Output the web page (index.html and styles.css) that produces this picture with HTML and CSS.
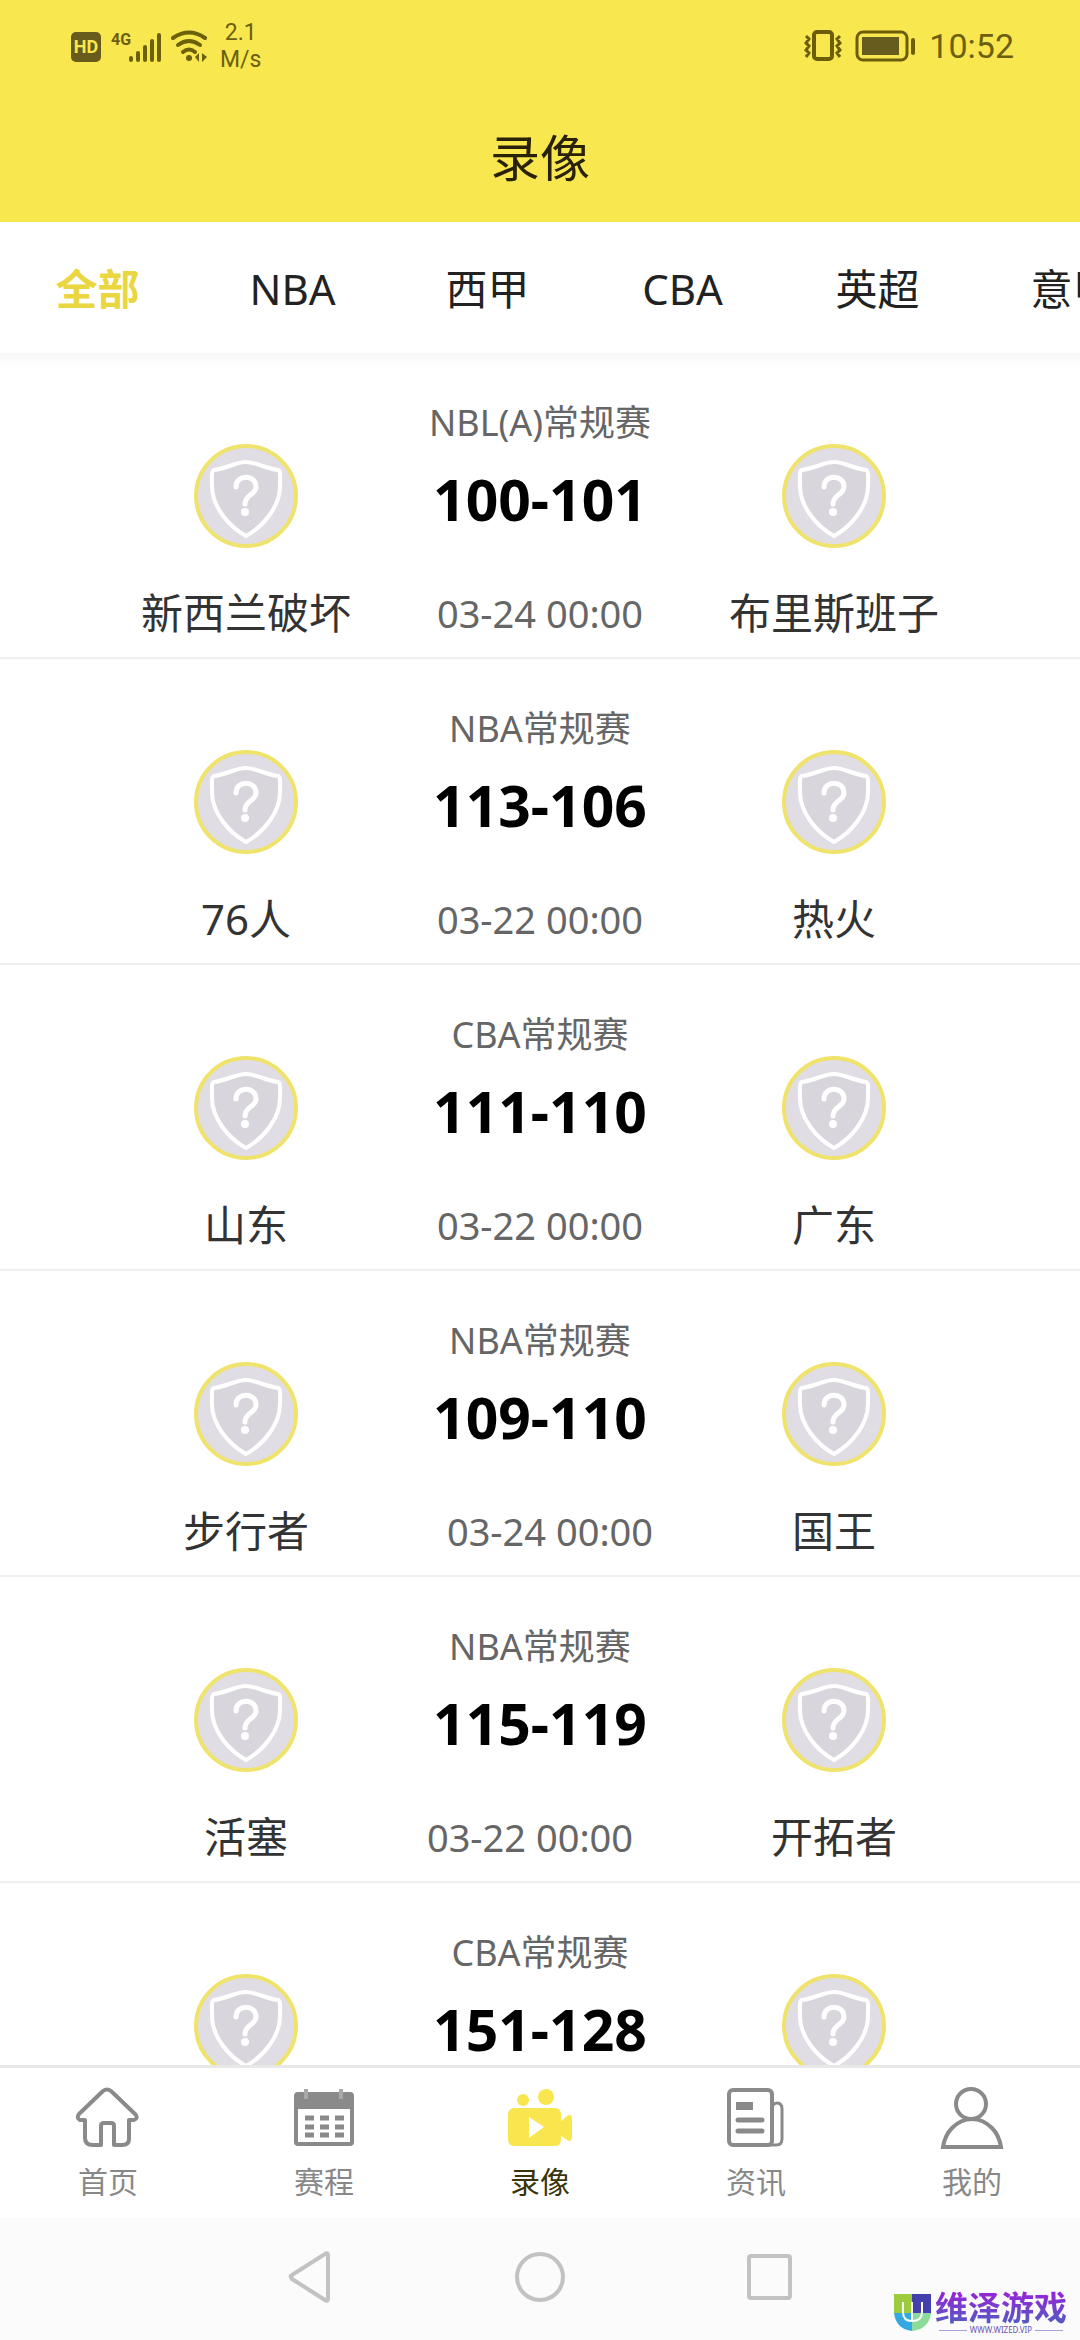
FILE: index.html
```html
<!DOCTYPE html>
<html lang="zh-CN">
<head>
    <meta charset="UTF-8">
    <meta name="viewport" content="width=device-width, initial-scale=1.0">
    <title>录像</title>
    <link rel="stylesheet" href="styles.css">
</head>
<body>
    <!-- 球队默认图标 -->
    <svg width="0" height="0" class="defs">
        <symbol id="shield" viewBox="0 0 104 104">
            <circle cx="52" cy="52" r="50" fill="#e0dde5" stroke="#f0e36c" stroke-width="4"/>
            <path d="M52 18C62 18 70 24 84 26C87 27 86 34 86 42C86 62 70 82 52 92C34 82 18 62 18 42C18 34 17 27 20 26C34 24 42 18 52 18Z" fill="#d8d6dc" stroke="#fff" stroke-width="4" stroke-linejoin="round"/>
            <path d="M42 43C42 30 62 30 62 43C62 51 51 50 51 60" fill="none" stroke="#fff" stroke-width="5" stroke-linecap="round"/>
            <circle cx="51" cy="68" r="4" fill="#fff"/>
        </symbol>
    </svg>

    <header class="header">
        <div class="status">
            <svg class="status-left" width="140" height="36" viewBox="0 0 140 36">
                <rect x="1" y="4" width="30" height="30" rx="5" fill="#675c1c"/>
                <text x="16" y="25" text-anchor="middle" class="hd">HD</text>
                <text x="41" y="17" class="g4">4G</text>
                <g stroke="#6c600c" stroke-width="4" stroke-linecap="round">
                    <path d="M61 30V32M68 25V32M75 19V32M82 13V32M89 7V32"/>
                </g>
                <g fill="none" stroke="#6c600c" stroke-width="4" stroke-linecap="round">
                    <path d="M103 10Q119 -1 135 10"/>
                    <path d="M108 17Q119 9 130 17"/>
                    <path d="M113 24Q119 19 125 24"/>
                </g>
                <circle cx="119" cy="30" r="3" fill="#6c600c"/>
                <path d="M129 25V34L125 29ZM132 25V34L137 29Z" fill="#6c600c"/>
            </svg>
            <div class="speed">2.1<br>M/s</div>
            <div class="status-right">
                <svg width="112" height="34" viewBox="0 0 112 34" fill="none" stroke="#6c5d08">
                    <rect x="11" y="3" width="18" height="27" rx="3" stroke-width="4"/>
                    <path d="M3 7L6 10L3 14L6 17L3 21L6 24L3 28M37 7L34 10L37 14L34 17L37 21L34 24L37 28" stroke-width="3"/>
                    <rect x="54" y="3" width="50" height="28" rx="6" stroke-width="3"/>
                    <rect x="59" y="8" width="37" height="18" fill="#665c1e" stroke="none"/>
                    <path d="M110 11V24" stroke-width="4" stroke-linecap="round"/>
                </svg>
                <span class="clock">10:52</span>
            </div>
        </div>
        <h1>录像</h1>
    </header>

    <nav class="tabs">
        <button class="active">全部</button>
        <button>NBA</button>
        <button>西甲</button>
        <button>CBA</button>
        <button>英超</button>
        <button>意甲</button>
    </nav>

    <main class="list">
        <div class="match">
            <div class="team"><svg class="logo"><use href="#shield"/></svg><p>新西兰破坏</p></div>
            <div class="info">
                <p class="league">NBL(A)常规赛</p>
                <p class="score">100-101</p>
                <p class="time">03-24 00:00</p>
            </div>
            <div class="team"><svg class="logo"><use href="#shield"/></svg><p>布里斯班子</p></div>
        </div>
        <div class="match">
            <div class="team"><svg class="logo"><use href="#shield"/></svg><p>76人</p></div>
            <div class="info">
                <p class="league">NBA常规赛</p>
                <p class="score">113-106</p>
                <p class="time">03-22 00:00</p>
            </div>
            <div class="team"><svg class="logo"><use href="#shield"/></svg><p>热火</p></div>
        </div>
        <div class="match">
            <div class="team"><svg class="logo"><use href="#shield"/></svg><p>山东</p></div>
            <div class="info">
                <p class="league">CBA常规赛</p>
                <p class="score">111-110</p>
                <p class="time">03-22 00:00</p>
            </div>
            <div class="team"><svg class="logo"><use href="#shield"/></svg><p>广东</p></div>
        </div>
        <div class="match long-home">
            <div class="team"><svg class="logo"><use href="#shield"/></svg><p>步行者</p></div>
            <div class="info">
                <p class="league">NBA常规赛</p>
                <p class="score">109-110</p>
                <p class="time">03-24 00:00</p>
            </div>
            <div class="team"><svg class="logo"><use href="#shield"/></svg><p>国王</p></div>
        </div>
        <div class="match long-away">
            <div class="team"><svg class="logo"><use href="#shield"/></svg><p>活塞</p></div>
            <div class="info">
                <p class="league">NBA常规赛</p>
                <p class="score">115-119</p>
                <p class="time">03-22 00:00</p>
            </div>
            <div class="team"><svg class="logo"><use href="#shield"/></svg><p>开拓者</p></div>
        </div>
        <div class="match">
            <div class="team"><svg class="logo"><use href="#shield"/></svg></div>
            <div class="info">
                <p class="league">CBA常规赛</p>
                <p class="score">151-128</p>
            </div>
            <div class="team"><svg class="logo"><use href="#shield"/></svg></div>
        </div>
    </main>

    <nav class="tabbar">
        <a href="#">
            <svg viewBox="0 0 66 66" fill="none" stroke="#8a8a8a" stroke-width="4" stroke-linejoin="round">
                <path d="M28 6Q32 3 36 6L60 29Q64 33 59 35H54V54Q54 60 47 60H39V41Q39 38 36 38H29Q26 38 26 41V60H18Q10 60 10 53V35H5Q1 33 4 29Z"/>
            </svg>
            <span>首页</span>
        </a>
        <a href="#">
            <svg viewBox="0 0 66 66">
                <rect x="5" y="9" width="56" height="50" rx="2" fill="none" stroke="#8a8a8a" stroke-width="4"/>
                <path d="M4 8H62V24H4Z" fill="#8a8a8a"/>
                <path d="M15 4V14M50 4V14" stroke="#a8a8a8" stroke-width="4"/>
                <path d="M14 33H23M29 33H38M44 33H53M14 42H23M29 42H38M44 42H53M14 50H23M29 50H38M44 50H53" stroke="#8a8a8a" stroke-width="5"/>
            </svg>
            <span>赛程</span>
        </a>
        <a href="#" class="active">
            <svg viewBox="0 0 66 66" fill="#f9e64f">
                <circle cx="16" cy="15" r="6"/>
                <circle cx="39" cy="12" r="8"/>
                <rect x="1" y="23" width="53" height="38" rx="6"/>
                <path d="M53 37L60 31Q65 28 65 34V51Q65 58 60 55L53 50Z"/>
                <path d="M22 32L37 42L22 53Z" fill="#fff"/>
            </svg>
            <span>录像</span>
        </a>
        <a href="#">
            <svg viewBox="0 0 66 66" fill="none" stroke="#8a8a8a" stroke-width="4">
                <rect x="6" y="5" width="43" height="55" rx="4"/>
                <path d="M49 23Q50 18 54 18Q59 18 59 24V54Q59 60 53 60H45" stroke-width="3"/>
                <path d="M13 21H30" stroke-width="8"/>
                <path d="M15 35H39M15 46H39" stroke-width="5" stroke-linecap="round"/>
            </svg>
            <span>资讯</span>
        </a>
        <a href="#">
            <svg viewBox="0 0 66 66" fill="none" stroke="#8a8a8a" stroke-width="4">
                <circle cx="32" cy="19" r="15"/>
                <path d="M4 62Q6 50 13 43Q22 34 33 34Q44 34 53 43Q60 50 62 62Z"/>
            </svg>
            <span>我的</span>
        </a>
    </nav>

    <footer class="sysbar">
        <button aria-label="返回"><svg viewBox="0 0 50 54"><path d="M6 27Q5 26 7 25L40 4Q43 2 43 5V49Q43 52 40 50L7 29Z"/></svg></button>
        <button aria-label="主屏幕"><svg viewBox="0 0 50 54"><circle cx="25" cy="27" r="23"/></svg></button>
        <button aria-label="最近任务"><svg viewBox="0 0 50 54"><rect x="4" y="6" width="41" height="42" rx="2"/></svg></button>
        <div class="brand">
            <svg width="37" height="37" viewBox="0 0 37 37">
                <path d="M0 0H18V19H0Z" fill="#9bcc3c"/>
                <path d="M18 0H37V19H18Z" fill="#4340ae"/>
                <path d="M0 19H18V37Q2 35 0 19Z" fill="#32a9e0"/>
                <path d="M18 19H37Q35 35 18 37Z" fill="#8bdc9a"/>
                <path d="M9 8V18Q9 27 18 27Q28 27 28 18V8M18 8V27" fill="none" stroke="#fff" stroke-width="2"/>
            </svg>
            <div>
                <strong>维泽游戏</strong>
                <small>WWW.WIZED.VIP</small>
            </div>
        </div>
    </footer>
</body>
</html>
```

FILE: styles.css
```css
* {margin: 0; padding: 0; box-sizing: border-box;}
body {height: 100vh; display: flex; flex-direction: column; overflow: hidden; background: #fff; font-family: "Noto Sans", "Noto Sans CJK SC", sans-serif; color: #222;}
button {border: 0; background: none; font: inherit; color: inherit;}
a {text-decoration: none; color: inherit;}
.defs {position: absolute;}

/* 顶部 */
.header {flex: none; background: #f9e74f; padding-bottom: 26px;}
.header h1 {font-size: 50px; line-height: 76px; font-weight: 400; text-align: center; color: #2a2208;}
.status {display: flex; align-items: center; height: 92px; margin-bottom: 28px; padding: 0 66px 0 70px; font-family: Roboto, sans-serif; color: #6c5f10;}
.hd {font-size: 18px; font-weight: 700; fill: #f9e74f;}
.g4 {font-size: 16px; font-weight: 700; fill: #6c600c;}
.speed {margin-left: 10px; font-size: 23px; line-height: 27px; text-align: center;}
.status-right {display: flex; align-items: center; gap: 14px; margin-left: auto;}
.clock {font-size: 34px; line-height: 40px;}

/* 分类 */
.tabs {flex: none; display: flex; height: 131px; padding-top: 3px; overflow: hidden;}
.tabs button {flex: 0 0 195px; font-size: 42px; line-height: 60px;}
.tabs .active {font-weight: 700; color: #e9d640;}

/* 列表 */
.list {flex: 1; min-height: 0; overflow: hidden; background: linear-gradient(#f8f8f8, #fff 16px);}
.match {display: flex; height: 306px; padding: 0 132px; border-bottom: 2px solid #f0f0f0;}
.team {width: 228px; padding-top: 91px; text-align: center;}
.logo {display: block; width: 104px; height: 104px; margin: 0 auto 40px;}
.team p {font-size: 42px; line-height: 50px; color: #333; white-space: nowrap;}
.info {flex: 1; padding-top: 46px; text-align: center; white-space: nowrap;}
.league {font-size: 36px; line-height: 48px; color: #666;}
.score {margin: 20px 0 57px; font-size: 57px; line-height: 64px; font-weight: 700; color: #000;}
.time {font-size: 38px; line-height: 50px; color: #666;}
/* 两边队名长度不同时，时间居于队名之间 */
.long-home .time {padding-left: 20px;}
.long-away .time {padding-right: 20px;}

/* 底部导航 */
.tabbar {flex: none; display: flex; height: 153px; padding-top: 17px; border-top: 3px solid #e8e8e8; background: #fff;}
.tabbar a {flex: 1; display: flex; flex-direction: column; align-items: center; gap: 11px; font-size: 30px; line-height: 40px; color: #888;}
.tabbar svg {width: 66px; height: 66px;}
.tabbar .active {color: #3a3408;}

/* 系统按键 */
.sysbar {flex: none; position: relative; display: flex; justify-content: center; height: 122px; background: #fbfbfb;}
.sysbar button {width: 230px;}
.sysbar button svg {width: 50px; height: 54px; fill: none; stroke: #c2c2c2; stroke-width: 4;}
.brand {position: absolute; right: 13px; bottom: 6px; display: flex; align-items: center; gap: 4px;}
.brand strong {display: block; font-size: 33px; line-height: 36px; font-weight: 700; background: linear-gradient(#9a20d8, #5060c0); -webkit-background-clip: text; background-clip: text; color: transparent;}
.brand small {display: flex; align-items: center; gap: 3px; margin: 0 4px; font-size: 8px; line-height: 8px; color: #6a55b5;}
.brand small::before, .brand small::after {content: ""; flex: 1; height: 1px; background: #a9a0d8;}
```
